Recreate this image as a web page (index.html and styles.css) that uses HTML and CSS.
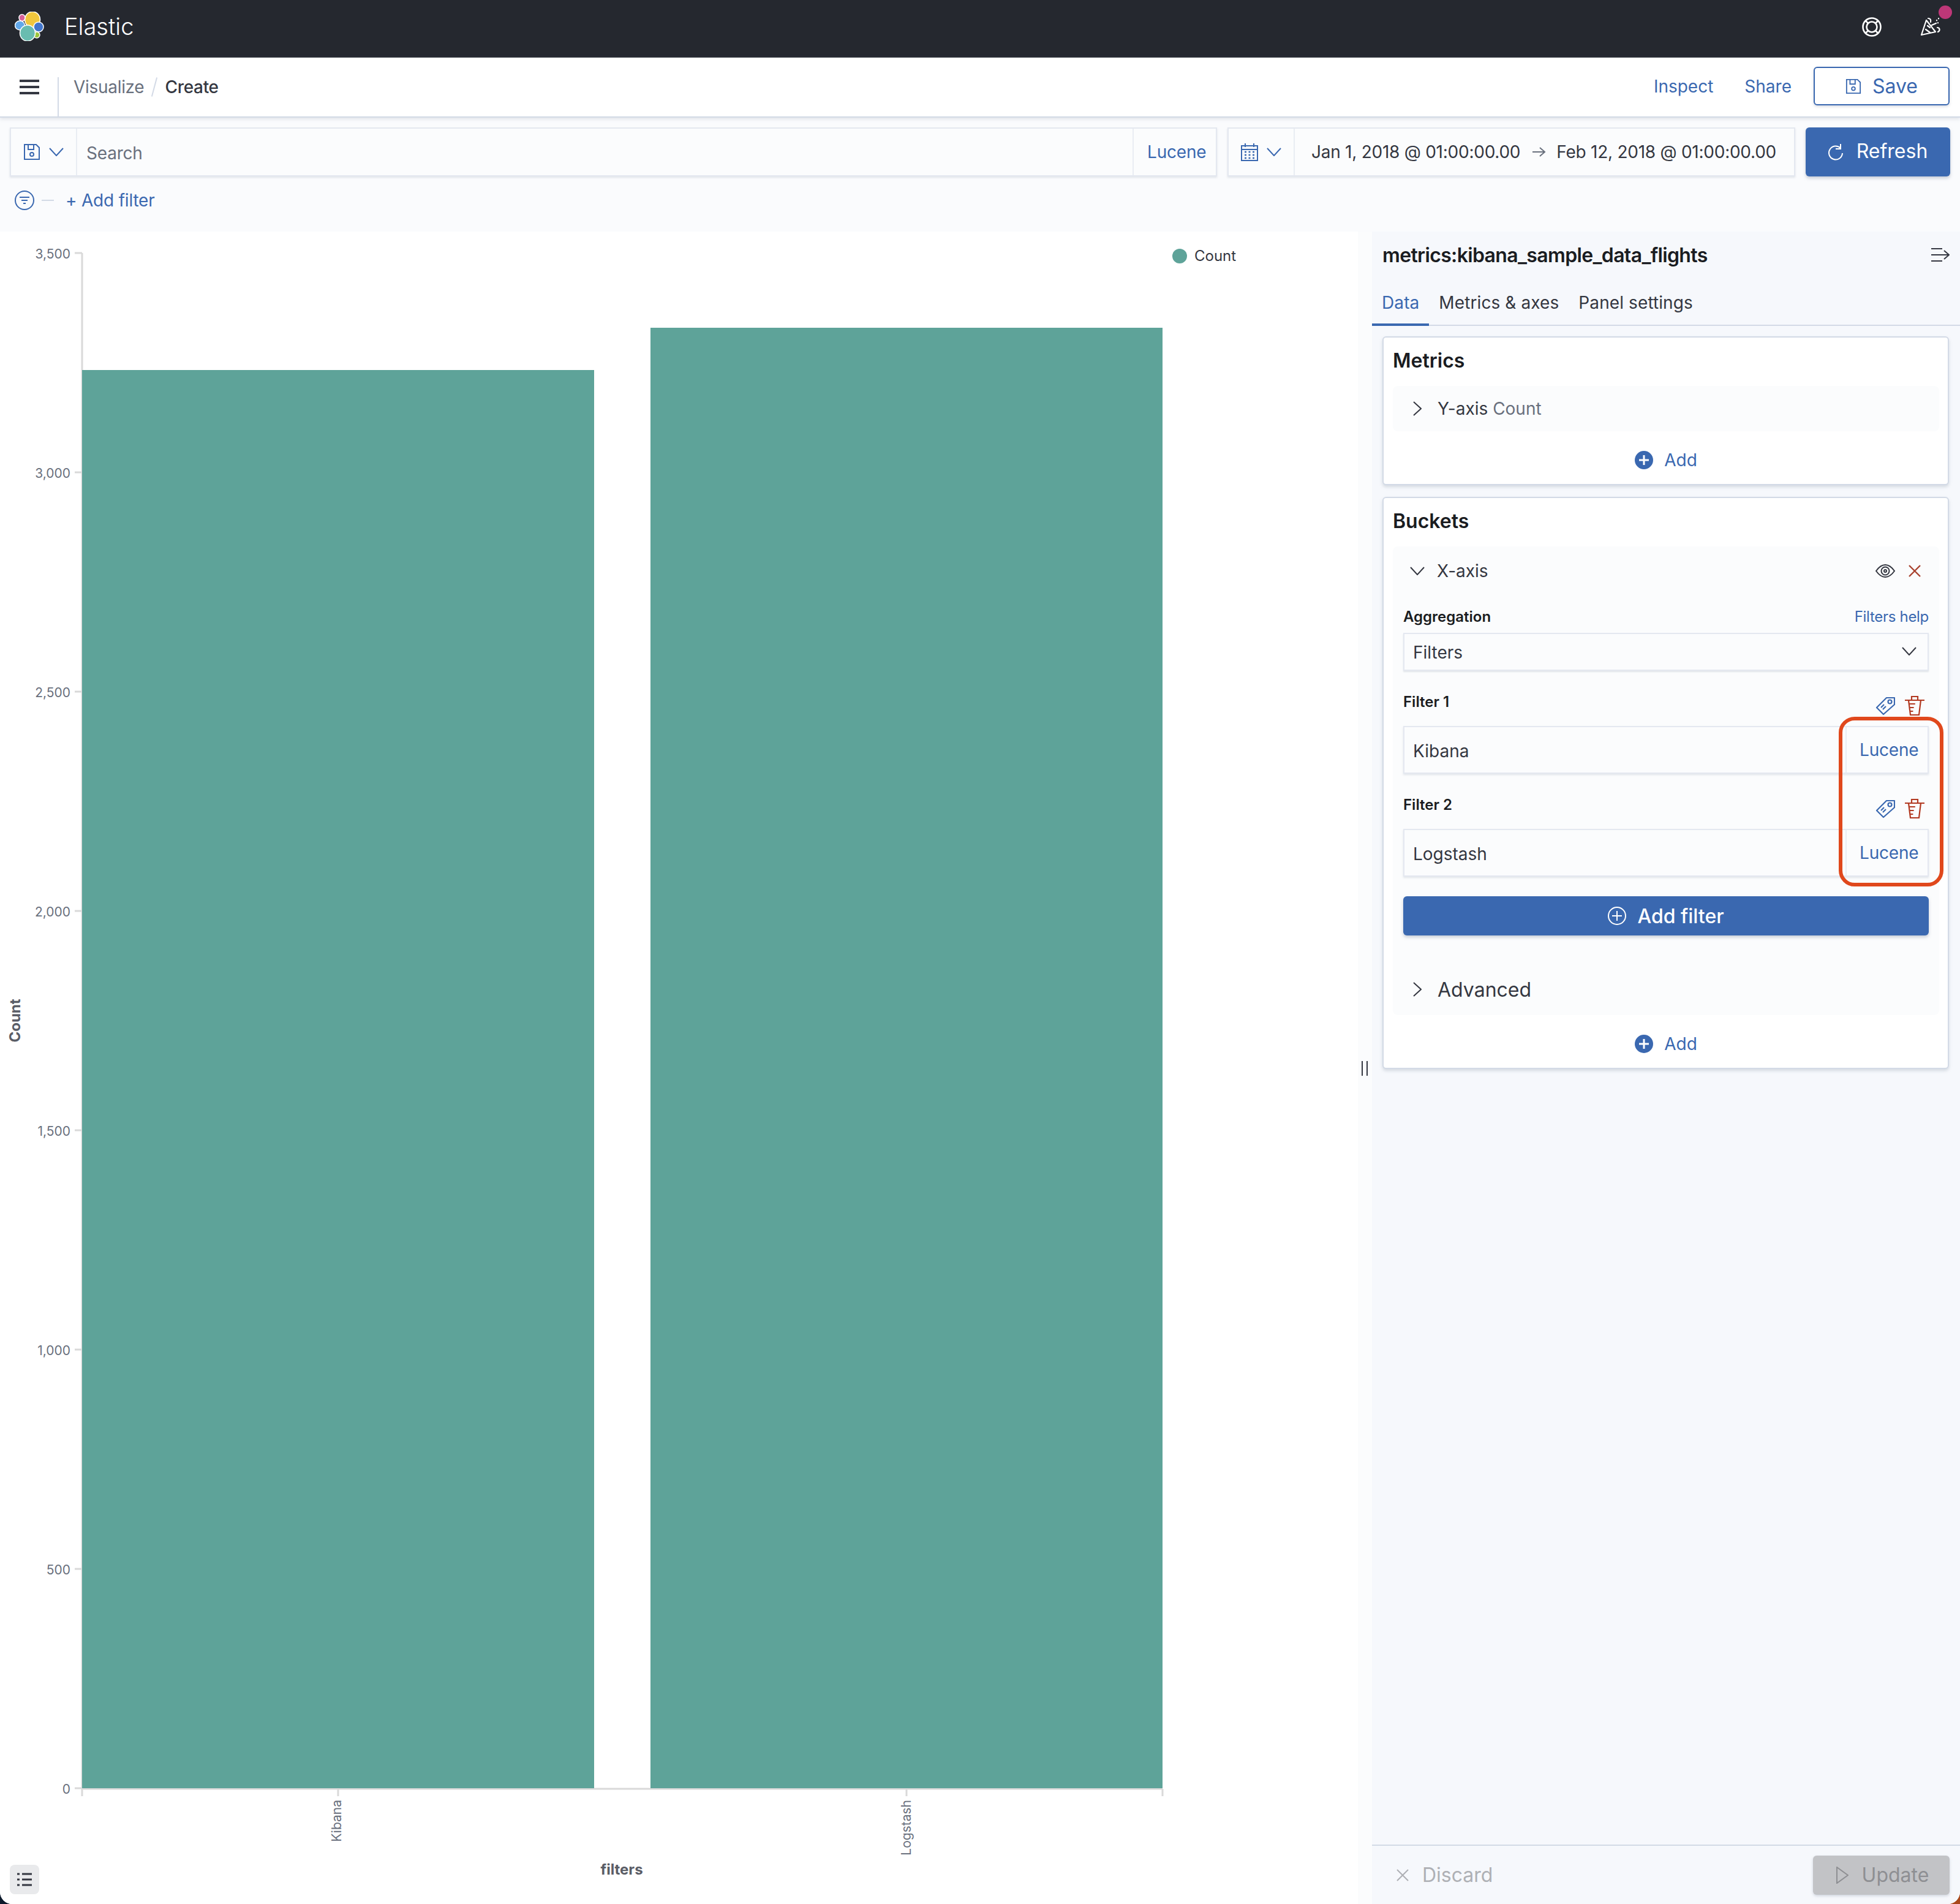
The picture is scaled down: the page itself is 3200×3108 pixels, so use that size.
FILE: index.html
```html
<!DOCTYPE html>
<html lang="en">
<head>
  <meta charset="UTF-8" />
  <title>Visualize - Elastic</title>
  <link rel="stylesheet" href="styles.css">
</head>
<body>
  <svg class="sprite" width="0" height="0">
    <symbol id="i-save" viewBox="0 0 28 28" fill="none" stroke="currentColor" stroke-width="2">
      <path d="M2 2h19l5 5v19H2z"/><path d="M8 2v8h9V2"/><circle cx="14" cy="18" r="3"/>
    </symbol>
    <symbol id="i-down" viewBox="0 0 24 14" fill="none" stroke="currentColor" stroke-width="2">
      <path d="M1 1l11 12L23 1"/>
    </symbol>
    <symbol id="i-right" viewBox="0 0 14 24" fill="none" stroke="currentColor" stroke-width="2">
      <path d="M1 1l12 11L1 23"/>
    </symbol>
    <symbol id="i-add" viewBox="0 0 30 30">
      <circle cx="15" cy="15" r="15" fill="currentColor"/><path d="M15 7v16M7 15h16" stroke="#fff" stroke-width="3"/>
    </symbol>
    <symbol id="i-tag" viewBox="0 0 32 32" fill="none" stroke="currentColor" stroke-width="2.200" stroke-linejoin="round">
      <path d="M18 3h13v11L13 30 2 19z"/><circle cx="23.500" cy="9.500" r="3"/><path d="M9 19l5-5M12 22l5-5"/>
    </symbol>
    <symbol id="i-trash" viewBox="0 0 32 32" fill="none" stroke="currentColor" stroke-width="2.200">
      <path d="M0 7h32M11 7V1h10v6M6 7l3 24h14l3-24M6.800 13h10M7.600 19h7M8.400 25h5"/>
    </symbol>
  </svg>

  <div class="app">
    <header class="topbar">
      <div class="brand">
        <svg class="logo" viewBox="0 0 48 48" width="48" height="48">
          <g stroke="#fff" stroke-width="1.5">
            <ellipse cx="29" cy="13" rx="12.5" ry="13" fill="#f0c63c"/>
            <ellipse cx="12" cy="10" rx="5" ry="5.5" fill="#d9619a"/>
            <ellipse cx="8.500" cy="22.500" rx="8" ry="7.500" fill="#61a8ea"/>
            <ellipse cx="39" cy="25" rx="8" ry="8" fill="#4276cc"/>
            <ellipse cx="36" cy="38" rx="5" ry="5" fill="#9bc53d"/>
            <ellipse cx="21" cy="35" rx="12.500" ry="13" fill="#69bcb0"/>
          </g>
        </svg>
        <span class="brand-name">Elastic</span>
      </div>
      <div class="top-icons">
        <svg class="help" viewBox="0 0 32 32" width="32" height="32" fill="none" stroke="#fff" stroke-width="2.600">
          <circle cx="16" cy="16" r="14.500"/><circle cx="16" cy="16" r="8.500"/>
          <path d="M5.500 5.500l5 5M26.500 5.500l-5 5M5.500 26.500l5-5M26.500 26.500l-5-5"/>
        </svg>
        <div class="news">
          <svg viewBox="0 0 34 32" width="34" height="32" fill="none" stroke="#fff" stroke-width="2.200" stroke-linejoin="round" stroke-linecap="round">
            <path d="M2 30L10 6l15 19z"/><path d="M9 21l7 5M12 15l4 3"/>
            <path d="M13 3c3 0 5 2 4 6M19 14l7-3M28 18c4 0 5 5 1 7M30 3v.5M27 6v.5M29 10v.5"/>
          </svg>
          <span class="news-dot"></span>
        </div>
      </div>
    </header>

    <nav class="navbar">
      <div class="menu-cell">
        <div class="burger"><span></span><span></span><span></span></div>
      </div>
      <div class="crumbs">
        <span class="crumb">Visualize</span>
        <span class="crumb-sep"></span>
        <span class="crumb-current">Create</span>
      </div>
      <div class="nav-actions">
        <a class="nav-link">Inspect</a>
        <a class="nav-link">Share</a>
        <button class="btn-save">
          <svg width="26" height="28"><use href="#i-save"/></svg>
          Save
        </button>
      </div>
    </nav>

    <section class="query">
      <div class="query-row">
        <div class="box search-box">
          <div class="box-prefix save-prefix">
            <svg width="28" height="28"><use href="#i-save"/></svg>
            <svg width="24" height="14"><use href="#i-down"/></svg>
          </div>
          <div class="search-text">Search</div>
          <div class="box-suffix">Lucene</div>
        </div>
        <div class="box date-box">
          <div class="box-prefix cal-prefix">
            <svg width="28" height="30" viewBox="0 0 28 30" fill="none" stroke="currentColor" stroke-width="2">
              <path d="M1 5h26v24H1zM1 11h26M7 1v6M21 1v6"/>
              <path d="M6 15h3M12.500 15h3M19 15h3M6 20h3M12.500 20h3M19 20h3M6 25h3M12.500 25h3M19 25h3" stroke-width="2.500"/>
            </svg>
            <svg width="24" height="14"><use href="#i-down"/></svg>
          </div>
          <div class="date-range">
            <span>Jan 1, 2018 @ 01:00:00.00</span>
            <svg class="date-arrow" width="23" height="18" viewBox="0 0 23 18" fill="none" stroke="#69707d" stroke-width="2"><path d="M1 9h20M13 2l8 7-8 7"/></svg>
            <span>Feb 12, 2018 @ 01:00:00.00</span>
          </div>
        </div>
        <button class="btn-refresh">
          <svg width="24" height="28" viewBox="0 0 24 28" fill="none" stroke="#fff" stroke-width="2"><path d="M20 8a11 11 0 1 0 3 8"/><path d="M20 1v8h-8"/></svg>
          <span>Refresh</span>
        </button>
      </div>
      <div class="filter-row">
        <svg width="32" height="32" viewBox="0 0 32 32" fill="none" stroke="#3a68b0" stroke-width="2">
          <circle cx="16" cy="16" r="15"/><path d="M8 11h16M11 16h10M14 21h4"/>
        </svg>
        <span class="filter-dash"></span>
        <a class="add-filter-link">+ Add filter</a>
      </div>
    </section>

    <main class="workspace">
      <div class="chart">
        <svg class="chart-svg" viewBox="0 378 2217 2730" width="2217" height="2730">
          <g stroke="#d9d9d9" stroke-width="3" fill="none">
            <path d="M134 413V2921M134 2920H1898"/>
            <path d="M122 413h12M122 771h12M122 1129h12M122 1487h12M122 1845h12M122 2203h12M122 2561h12M122 2919h12"/>
            <path d="M134 2920v12M552 2920v12M1480 2920v12M1898 2920v12"/>
          </g>
          <rect x="134" y="604" width="836" height="2315" fill="#5ea399"/>
          <rect x="1062" y="535" width="836" height="2384" fill="#5ea399"/>
          <g class="tick-y">
            <text x="115" y="422">3,500</text>
            <text x="115" y="780">3,000</text>
            <text x="115" y="1138">2,500</text>
            <text x="115" y="1496">2,000</text>
            <text x="115" y="1854">1,500</text>
            <text x="115" y="2212">1,000</text>
            <text x="115" y="2570">500</text>
            <text x="115" y="2928">0</text>
          </g>
          <g class="tick-x">
            <text transform="translate(557 2938) rotate(-90)">Kibana</text>
            <text transform="translate(1487 2938) rotate(-90)">Logstash</text>
          </g>
          <text class="axis-title" transform="translate(33 1666) rotate(-90)">Count</text>
          <text class="axis-title" x="1015" y="3060">filters</text>
          <circle cx="1926" cy="418" r="12" fill="#5ea399"/>
          <text class="legend-text" x="1950" y="426">Count</text>
        </svg>
        <button class="legend-toggle">
          <svg width="24" height="24" viewBox="0 0 24 24" stroke="#343741" stroke-width="3"><path d="M0 3h4M8 3h16M0 12h4M8 12h16M0 21h4M8 21h16"/></svg>
        </button>
      </div>

      <div class="gutter"><span class="gutter-grip"></span></div>

      <aside class="panel">
        <div class="panel-head">
          <span class="panel-title">metrics:kibana_sample_data_flights</span>
          <svg width="30" height="24" viewBox="0 0 30 24" fill="none" stroke="#343741" stroke-width="2"><path d="M0 2h18M0 12h28M0 22h18M21 5l8 7-8 7"/></svg>
        </div>
        <div class="tabs">
          <span class="tab tab-active">Data</span>
          <span class="tab">Metrics &amp; axes</span>
          <span class="tab">Panel settings</span>
        </div>

        <div class="panel-body">
          <section class="card">
            <h3 class="card-title">Metrics</h3>
            <div class="agg">
              <div class="agg-head">
                <svg class="chev" width="14" height="24"><use href="#i-right"/></svg>
                <span>Y-axis <span class="muted">Count</span></span>
              </div>
            </div>
            <div class="card-add">
              <svg width="30" height="30"><use href="#i-add"/></svg>
              <span>Add</span>
            </div>
          </section>

          <section class="card">
            <h3 class="card-title">Buckets</h3>
            <div class="agg agg-open">
              <div class="agg-head">
                <svg class="chev-down" width="24" height="14"><use href="#i-down"/></svg>
                <span class="agg-name">X-axis</span>
                <svg class="eye" width="32" height="24" viewBox="0 0 32 24" fill="none" stroke="#343741" stroke-width="2">
                  <path d="M1 12C6 5 11 2 16 2s10 3 15 10c-5 7-10 10-15 10S6 19 1 12z"/><circle cx="16" cy="12" r="6.500"/><circle cx="16" cy="12" r="2"/>
                </svg>
                <svg class="cross" width="20" height="20" viewBox="0 0 20 20" fill="none" stroke="#a8422f" stroke-width="2.400"><path d="M1 1l18 18M19 1L1 19"/></svg>
              </div>

              <div class="field-label first-label">
                <span>Aggregation</span>
                <a class="help-link">Filters help</a>
              </div>
              <div class="select">
                <span>Filters</span>
                <svg width="24" height="14"><use href="#i-down"/></svg>
              </div>

              <div class="field-label filter-label">
                <span>Filter 1</span>
                <div class="filter-icons">
                  <svg class="tag" width="32" height="32"><use href="#i-tag"/></svg>
                  <svg class="trash" width="32" height="32"><use href="#i-trash"/></svg>
                </div>
              </div>
              <div class="input">
                <span class="input-text">Kibana</span>
                <span class="input-lang">Lucene</span>
              </div>

              <div class="field-label filter-label">
                <span>Filter 2</span>
                <div class="filter-icons">
                  <svg class="tag" width="32" height="32"><use href="#i-tag"/></svg>
                  <svg class="trash" width="32" height="32"><use href="#i-trash"/></svg>
                </div>
              </div>
              <div class="input input-last">
                <span class="input-text">Logstash</span>
                <span class="input-lang">Lucene</span>
              </div>

              <button class="btn-add-filter">
                <svg width="30" height="30" viewBox="0 0 30 30" fill="none" stroke="#fff" stroke-width="2"><circle cx="15" cy="15" r="14"/><path d="M15 7v16M7 15h16"/></svg>
                <span>Add filter</span>
              </button>

              <div class="advanced">
                <svg class="chev" width="14" height="24"><use href="#i-right"/></svg>
                <span>Advanced</span>
              </div>

              <div class="highlight"></div>
            </div>
            <div class="card-add">
              <svg width="30" height="30"><use href="#i-add"/></svg>
              <span>Add</span>
            </div>
          </section>
        </div>

        <div class="panel-foot">
          <span class="discard">
            <svg width="20" height="20" viewBox="0 0 20 20" fill="none" stroke="#aeb0b5" stroke-width="2"><path d="M1 1l18 18M19 1L1 19"/></svg>
            Discard
          </span>
          <button class="btn-update">
            <svg width="20" height="28" viewBox="0 0 20 28" fill="none" stroke="#8e8f93" stroke-width="2"><path d="M1 1v26l18-13z"/></svg>
            <span>Update</span>
          </button>
        </div>
      </aside>
    </main>
  </div>
</body>
</html>
```

FILE: styles.css
```css
* {
  margin: 0;
  padding: 0;
  box-sizing: border-box;
}

html, body {
  width: 3200px;
  height: 3108px;
  overflow: hidden;
}

body {
  font-family: Inter, "Liberation Sans", sans-serif;
  font-size: 28px;
  color: #343741;
  background: linear-gradient(90deg, #0d1a2c 50%, #a8481c 50%);
}

button {
  font-family: inherit;
}

a {
  color: #3a68b0;
}

.sprite {
  position: absolute;
}

.app {
  width: 3200px;
  height: 3108px;
  display: flex;
  flex-direction: column;
  background: #fff;
  border-radius: 0 0 20px 20px;
  overflow: hidden;
}

/* top bar */
.topbar {
  height: 94px;
  flex: none;
  background: #25282f;
  display: flex;
  align-items: center;
  justify-content: space-between;
  padding: 0 31px 8px 24px;
}

.brand {
  display: flex;
  align-items: center;
  gap: 33px;
}

.brand-name {
  color: #fff;
  font-size: 38px;
  font-weight: 300;
}

.top-icons {
  display: flex;
  align-items: center;
  gap: 63px;
}

.help {
  display: block;
  margin-top: 2px;
}

.news {
  position: relative;
  width: 34px;
  height: 32px;
}

.news-dot {
  position: absolute;
  top: -18px;
  left: 30px;
  width: 22px;
  height: 22px;
  border-radius: 50%;
  background: #be3778;
}

/* breadcrumbs row */
.navbar {
  height: 98px;
  flex: none;
  background: #fff;
  display: flex;
  border-bottom: 2px solid #d3dae6;
  box-shadow: 0 2px 6px rgba(152, 162, 179, 0.3);
  position: relative;
}

.menu-cell {
  width: 32px;
  margin-left: 32px;
  padding-top: 36px;
}

.burger {
  display: flex;
  flex-direction: column;
  gap: 6px;
}

.burger span {
  height: 4px;
  background: #343741;
}

.crumbs {
  margin: 32px 0 0 30px;
  padding-left: 24px;
  border-left: 2px solid #d3dae6;
  display: flex;
  align-items: flex-start;
  height: 64px;
  letter-spacing: -0.3px;
}

.crumb {
  color: #69707d;
  line-height: 32px;
}

.crumb-sep {
  width: 2px;
  height: 32px;
  margin: 0 16px;
  background: #d3dae6;
  transform: rotate(15deg);
}

.crumb-current {
  font-weight: 500;
  line-height: 32px;
}

.nav-actions {
  margin-left: auto;
  display: flex;
  align-items: center;
  padding: 16px 17px 19px 0;
  height: 96px;
}

.nav-link {
  margin-right: 51px;
}

.nav-link + .nav-link {
  margin-right: 36px;
}

.btn-save {
  width: 222px;
  height: 63px;
  display: flex;
  align-items: center;
  justify-content: center;
  gap: 18px;
  font-size: 32px;
  color: #3a68b0;
  background: #fff;
  border: 2px solid #3a68b0;
  border-radius: 6px;
  box-shadow: 0 2px 4px rgba(152, 162, 179, 0.4);
}

/* query bar */
.query {
  height: 186px;
  flex: none;
  background: #fafbfd;
}

.query-row {
  display: flex;
  gap: 17px;
  padding: 16px 16px 0;
}

.box {
  height: 80px;
  display: flex;
  align-items: center;
  background: #fbfcfd;
  border: 2px solid #e4e8f0;
  box-shadow: 0 2px 3px rgba(152, 162, 179, 0.25);
}

.search-box {
  width: 1971px;
}

.box-prefix {
  height: 100%;
  display: flex;
  align-items: center;
  color: #3a68b0;
  border-right: 2px solid #e9edf3;
}

.save-prefix {
  width: 108px;
  padding-left: 20px;
  gap: 14px;
}

.search-text {
  flex: 1;
  padding: 3px 0 0 15px;
  color: #69707d;
  letter-spacing: -0.2px;
}

.box-suffix {
  height: 100%;
  width: 136px;
  padding-left: 22px;
  display: flex;
  align-items: center;
  color: #3a68b0;
  border-left: 2px solid #e9edf3;
  letter-spacing: -0.2px;
}

.date-box {
  width: 927px;
}

.cal-prefix {
  width: 108px;
  padding-left: 20px;
  gap: 14px;
}

.date-range {
  display: flex;
  align-items: center;
  padding-left: 27px;
  letter-spacing: -0.25px;
}

.date-arrow {
  margin: 0 17px 0 19px;
}

.btn-refresh {
  width: 236px;
  height: 80px;
  display: flex;
  align-items: center;
  justify-content: center;
  gap: 22px;
  font-size: 32px;
  color: #fff;
  background: #3a68b0;
  border: 0;
  border-radius: 6px;
  box-shadow: 0 3px 5px rgba(152, 162, 179, 0.5);
}

.btn-refresh span {
  padding-bottom: 4px;
}

.filter-row {
  display: flex;
  align-items: center;
  height: 60px;
  padding: 18px 0 0 24px;
}

.filter-dash {
  width: 20px;
  height: 2px;
  margin: 0 19px 0 12px;
  background: #d3dae6;
}

.add-filter-link {
  letter-spacing: -0.2px;
}

/* chart */
.workspace {
  flex: 1;
  display: flex;
  min-height: 0;
}

.chart {
  width: 2217px;
  flex: none;
  position: relative;
  background: #fff;
}

.chart-svg {
  display: block;
}

.tick-y text {
  font-size: 21px;
  fill: #69707d;
  text-anchor: end;
}

.tick-x text {
  font-size: 21px;
  fill: #69707d;
  text-anchor: end;
}

.axis-title {
  font-size: 24px;
  font-weight: 700;
  fill: #5a5d66;
  text-anchor: middle;
}

.legend-text {
  font-size: 24px;
  fill: #343741;
}

.legend-toggle {
  position: absolute;
  left: 16px;
  bottom: 16px;
  width: 48px;
  height: 48px;
  display: flex;
  align-items: center;
  justify-content: center;
  background: #e9eaec;
  border: 0;
  border-radius: 8px;
}

.gutter {
  width: 23px;
  flex: none;
  background: #fbfcfd;
  position: relative;
}

.gutter-grip {
  position: absolute;
  top: 1354px;
  left: 6px;
  width: 10px;
  height: 24px;
  border-left: 2px solid #343741;
  border-right: 2px solid #343741;
}

/* side panel */
.panel {
  width: 960px;
  flex: none;
  display: flex;
  flex-direction: column;
  background: #f6f8fc;
}

.panel-head {
  height: 76px;
  flex: none;
  display: flex;
  align-items: center;
  justify-content: space-between;
  padding: 0 17px;
}

.panel-title {
  font-size: 32px;
  font-weight: 600;
  color: #1a1c21;
  letter-spacing: -0.65px;
}

.tabs {
  height: 78px;
  flex: none;
  display: flex;
  border-bottom: 2px solid #d3dae6;
}

.tab {
  padding: 22px 16px 0;
  line-height: 36px;
  letter-spacing: 0.1px;
}

.tab-active {
  color: #3a68b0;
  border-bottom: 4px solid #3a68b0;
  margin-bottom: -2px;
}

.panel-body {
  flex: 1;
  display: flex;
  flex-direction: column;
  gap: 19px;
  padding: 17px 18px 0 17px;
}

.card {
  background: #fff;
  border: 2px solid #d3dae6;
  border-radius: 6px;
  box-shadow: 0 3px 5px rgba(152, 162, 179, 0.35);
  padding: 0 14px 0 15px;
}

.card-title {
  height: 79px;
  display: flex;
  align-items: center;
  padding-bottom: 4px;
  font-size: 32px;
  font-weight: 600;
  color: #1a1c21;
}

.agg {
  background: #fbfcfd;
  border-radius: 8px;
  position: relative;
}

.agg-head {
  height: 74px;
  display: flex;
  align-items: center;
  padding-left: 33px;
  gap: 26px;
}

.agg-open {
  padding: 0 17px 1px;
}

.agg-open .agg-head {
  height: 80px;
  padding-left: 11px;
  gap: 20px;
}

.agg-name {
  flex: 1;
}

.agg-open .agg-head .eye {
  margin-right: 2px;
}

.cross {
  margin-right: 13px;
}

.muted {
  color: #69707d;
}

.card-add {
  height: 86px;
  display: flex;
  align-items: center;
  justify-content: center;
  gap: 18px;
  color: #3a68b0;
  padding-top: 8px;
}

.field-label {
  height: 34px;
  display: flex;
  align-items: center;
  justify-content: space-between;
  font-size: 24px;
  font-weight: 600;
  color: #1a1c21;
}

.first-label {
  margin-top: 17px;
  margin-bottom: 10px;
}

.help-link {
  font-weight: 400;
  letter-spacing: -0.3px;
}

.select {
  height: 62px;
  display: flex;
  align-items: center;
  justify-content: space-between;
  padding: 2px 18px 0 14px;
  background: #fbfcfd;
  border: 2px solid #e4e8f0;
  box-shadow: 0 2px 2px rgba(152, 162, 179, 0.25);
}

.select svg {
  margin-top: -4px;
}

.filter-label {
  margin-top: 33px;
  margin-bottom: 23px;
}

.filter-icons {
  display: flex;
  align-items: center;
  gap: 16px;
  margin-top: 14px;
  margin-right: 7px;
}

.tag {
  color: #3a68b0;
}

.trash {
  color: #b23a22;
}

.input {
  height: 78px;
  display: flex;
  align-items: center;
  background: #fbfcfd;
  border: 2px solid #e4e8f0;
  box-shadow: 0 2px 3px rgba(152, 162, 179, 0.25);
}

.input-text {
  flex: 1;
  padding: 3px 0 0 14px;
}

.input-lang {
  width: 134px;
  height: 100%;
  padding-left: 21px;
  display: flex;
  align-items: center;
  color: #3a68b0;
  border-left: 2px solid #e9edf3;
  letter-spacing: -0.2px;
}

.btn-add-filter {
  width: 100%;
  height: 64px;
  margin-top: 32px;
  display: flex;
  align-items: center;
  justify-content: center;
  gap: 18px;
  font-size: 32px;
  font-weight: 500;
  color: #fff;
  background: #3a68b0;
  border: 0;
  border-radius: 6px;
  box-shadow: 0 3px 5px rgba(152, 162, 179, 0.5);
}

.advanced {
  height: 82px;
  margin-top: 47px;
  display: flex;
  align-items: center;
  gap: 26px;
  padding-left: 16px;
  font-size: 32px;
}

.highlight {
  position: absolute;
  left: 728px;
  top: 278px;
  width: 171px;
  height: 277px;
  border: 6px solid #e0481c;
  border-radius: 26px;
}

.panel-foot {
  height: 97px;
  flex: none;
  display: flex;
  align-items: center;
  justify-content: space-between;
  padding: 0 17px 0 40px;
  border-top: 2px solid #d3dae6;
}

.discard {
  display: flex;
  align-items: center;
  gap: 22px;
  font-size: 32px;
  color: #aeb0b5;
}

.btn-update {
  width: 223px;
  height: 64px;
  display: flex;
  align-items: center;
  justify-content: center;
  gap: 22px;
  font-size: 32px;
  color: #8e8f93;
  background: #c2c3c6;
  border: 0;
  border-radius: 6px;
  padding-left: 4px;
  box-shadow: 0 2px 4px rgba(152, 162, 179, 0.4);
}
```
